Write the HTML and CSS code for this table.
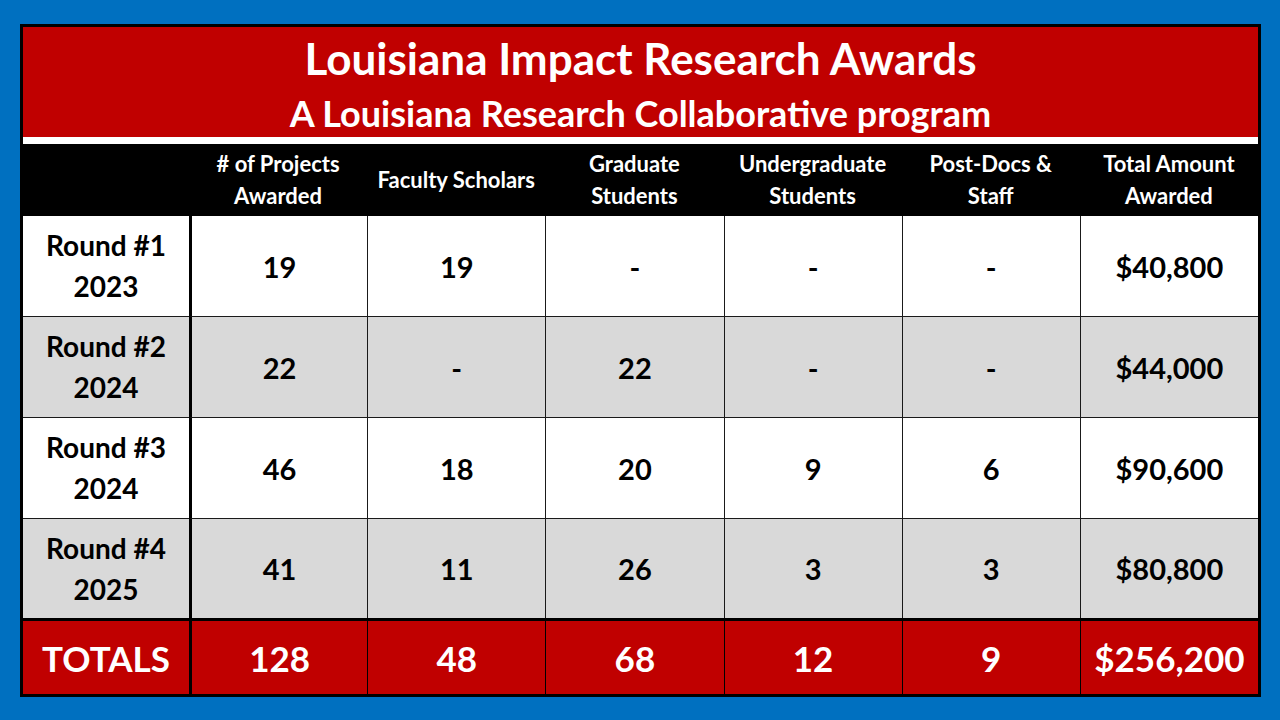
FILE: index.html
```html
<!DOCTYPE html>
<html lang="en">
<head>
<meta charset="utf-8">
<title>Louisiana Impact Research Awards</title>
<link rel="stylesheet" href="styles.css">
</head>
<body>
<div class="board">
  <div class="title">
    <div class="title-main">Louisiana Impact Research Awards</div>
    <div class="title-sub">A Louisiana Research Collaborative program</div>
  </div>
  <div class="grid">
    <div class="cell head first"></div>
    <div class="cell head">#&nbsp;of Projects<br>Awarded</div>
    <div class="cell head">Faculty Scholars</div>
    <div class="cell head">Graduate<br>Students</div>
    <div class="cell head">Undergraduate<br>Students</div>
    <div class="cell head">Post-Docs &amp;<br>Staff</div>
    <div class="cell head">Total Amount<br>Awarded</div>

    <div class="cell label white top">Round #1<br>2023</div>
    <div class="cell num white c2 top">19</div>
    <div class="cell num white top">19</div>
    <div class="cell num white top">-</div>
    <div class="cell num white top">-</div>
    <div class="cell num white top">-</div>
    <div class="cell num white top">$40,800</div>

    <div class="cell label gray">Round #2<br>2024</div>
    <div class="cell num gray c2">22</div>
    <div class="cell num gray">-</div>
    <div class="cell num gray">22</div>
    <div class="cell num gray">-</div>
    <div class="cell num gray">-</div>
    <div class="cell num gray">$44,000</div>

    <div class="cell label white">Round #3<br>2024</div>
    <div class="cell num white c2">46</div>
    <div class="cell num white">18</div>
    <div class="cell num white">20</div>
    <div class="cell num white">9</div>
    <div class="cell num white">6</div>
    <div class="cell num white">$90,600</div>

    <div class="cell label gray">Round #4<br>2025</div>
    <div class="cell num gray c2">41</div>
    <div class="cell num gray">11</div>
    <div class="cell num gray">26</div>
    <div class="cell num gray">3</div>
    <div class="cell num gray">3</div>
    <div class="cell num gray">$80,800</div>

    <div class="cell total tlabel">TOTALS</div>
    <div class="cell total c2">128</div>
    <div class="cell total">48</div>
    <div class="cell total">68</div>
    <div class="cell total">12</div>
    <div class="cell total">9</div>
    <div class="cell total">$256,200</div>
  </div>
</div>
</body>
</html>
```

FILE: styles.css
```css
html, body {
  margin: 0;
  padding: 0;
}
body {
  background: #0070c0;
  width: 1280px;
  height: 720px;
  overflow: hidden;
  font-family: "Lato", "Open Sans", sans-serif;
  font-weight: 700;
}
.board {
  box-sizing: border-box;
  width: 1241px;
  margin: 24px 0 0 20px;
  border: 3px solid #000;
  background: #000;
}
.title {
  box-sizing: border-box;
  height: 117px;
  background: #c00000;
  border-bottom: 7px solid #fff;
  color: #fff;
  text-align: center;
  padding-top: 4px;
}
.title-main {
  font-size: 44px;
  line-height: 54px;
}
.title-sub {
  font-size: 36px;
  line-height: 40px;
  margin-top: 8px;
}
.grid {
  display: grid;
  grid-template-columns: 166px repeat(6, 1fr);
  grid-template-rows: 72px 100px 101px 101px 100px 76px;
}
.cell {
  box-sizing: border-box;
  display: flex;
  align-items: center;
  justify-content: center;
  text-align: center;
}
.head {
  background: #000;
  color: #fff;
  font-size: 22px;
  line-height: 32px;
}
.white { background: #fff; }
.gray { background: #d9d9d9; }
.label {
  color: #000;
  font-size: 28px;
  line-height: 41px;
  border-top: 1px solid #1a1a1a;
}
.num {
  color: #000;
  font-size: 29px;
  border-top: 1px solid #1a1a1a;
  border-left: 1px solid #1a1a1a;
}
.cell.top {
  border-top: 0;
}
.num.c2 {
  border-left: 3px solid #000;
}
.total {
  background: #c00000;
  color: #fff;
  font-size: 35px;
  border-top: 3px solid #000;
  border-left: 1px solid #000;
}
.total.tlabel {
  border-left: 0;
}
.total.c2 {
  border-left: 3px solid #000;
}
```
